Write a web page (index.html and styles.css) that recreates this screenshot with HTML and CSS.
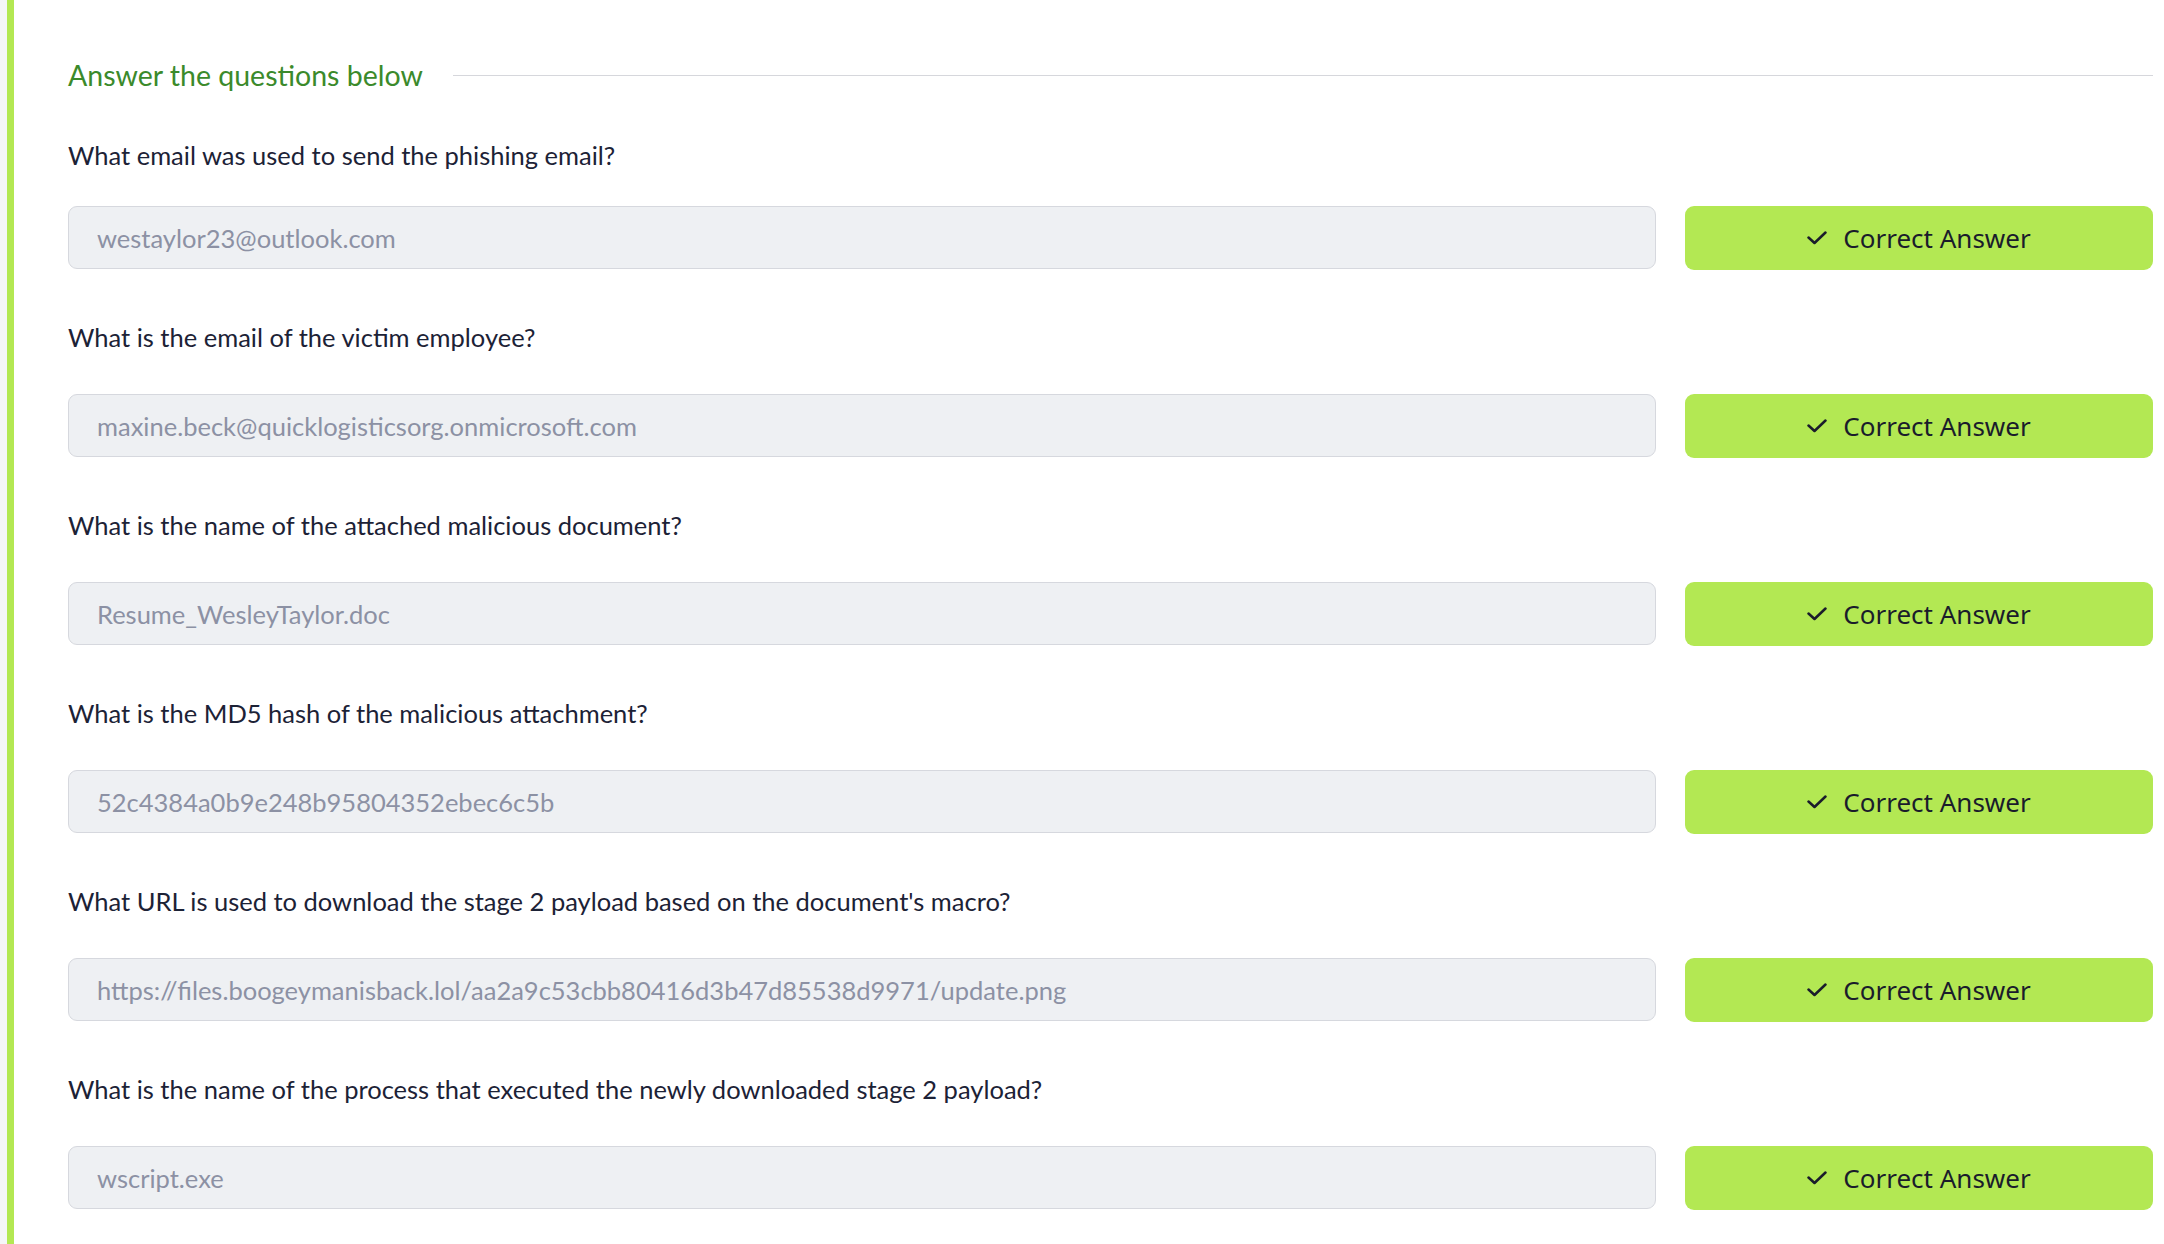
FILE: index.html
```html
<!DOCTYPE html>
<html lang="en">
<head>
  <meta charset="UTF-8" />
  <meta name="viewport" content="width=device-width, initial-scale=1.0"/>
  <title>Answer the questions below</title>
  <link rel="stylesheet" href="styles.css">
</head>
<body>
  <div class="page">
    <div class="gutter"></div>
    <div class="rail"></div>
    <div class="content">
      <div class="section-head">
        <div class="section-title">Answer the questions below</div>
        <div class="section-line"></div>
      </div>

      <div class="question first">
        <div class="q-text">What email was used to send the phishing email?</div>
        <div class="answer-row">
          <input class="answer-input" type="text" value="westaylor23@outlook.com" readonly />
          <button class="correct-btn"><svg class="check" viewBox="0 0 20 14"><path d="M1.5 6.5L7.5 12L18.5 1.5"/></svg>Correct Answer</button>
        </div>
      </div>

      <div class="question">
        <div class="q-text">What is the email of the victim employee?</div>
        <div class="answer-row">
          <input class="answer-input" type="text" value="maxine.beck@quicklogisticsorg.onmicrosoft.com" readonly />
          <button class="correct-btn"><svg class="check" viewBox="0 0 20 14"><path d="M1.5 6.5L7.5 12L18.5 1.5"/></svg>Correct Answer</button>
        </div>
      </div>

      <div class="question">
        <div class="q-text">What is the name of the attached malicious document?</div>
        <div class="answer-row">
          <input class="answer-input" type="text" value="Resume_WesleyTaylor.doc" readonly />
          <button class="correct-btn"><svg class="check" viewBox="0 0 20 14"><path d="M1.5 6.5L7.5 12L18.5 1.5"/></svg>Correct Answer</button>
        </div>
      </div>

      <div class="question">
        <div class="q-text">What is the MD5 hash of the malicious attachment?</div>
        <div class="answer-row">
          <input class="answer-input" type="text" value="52c4384a0b9e248b95804352ebec6c5b" readonly />
          <button class="correct-btn"><svg class="check" viewBox="0 0 20 14"><path d="M1.5 6.5L7.5 12L18.5 1.5"/></svg>Correct Answer</button>
        </div>
      </div>

      <div class="question">
        <div class="q-text">What URL is used to download the stage 2 payload based on the document's macro?</div>
        <div class="answer-row">
          <input class="answer-input" type="text" value="https://files.boogeymanisback.lol/aa2a9c53cbb80416d3b47d85538d9971/update.png" readonly />
          <button class="correct-btn"><svg class="check" viewBox="0 0 20 14"><path d="M1.5 6.5L7.5 12L18.5 1.5"/></svg>Correct Answer</button>
        </div>
      </div>

      <div class="question">
        <div class="q-text">What is the name of the process that executed the newly downloaded stage 2 payload?</div>
        <div class="answer-row">
          <input class="answer-input" type="text" value="wscript.exe" readonly />
          <button class="correct-btn"><svg class="check" viewBox="0 0 20 14"><path d="M1.5 6.5L7.5 12L18.5 1.5"/></svg>Correct Answer</button>
        </div>
      </div>
    </div>
  </div>
</body>
</html>
```

FILE: styles.css
```css
body {
  margin: 0;
  font-family: Lato, "Liberation Sans", sans-serif;
  background-color: #ffffff;
  color: #1c2236;
}

.page {
  display: flex;
  min-height: 1244px;
}

.gutter {
  width: 7px;
  background-color: #f5f6f8;
}

.rail {
  width: 7px;
  background-color: #b3e853;
}

.content {
  flex: 1;
  padding: 53px 11px 0 54px;
}

.section-head {
  display: flex;
  align-items: center;
  margin-bottom: 39px;
}

.section-title {
  font-size: 28.5px;
  line-height: 45px;
  color: #3b8a2b;
}

.section-line {
  flex: 1;
  height: 1.5px;
  margin-left: 30px;
  background-color: #d6d7dc;
}

.question {
  margin-bottom: 49px;
}

.q-text {
  font-size: 25.5px;
  line-height: 36px;
  margin-bottom: 39px;
}

/* первый вопрос стоит ближе к полю */
.question.first .q-text {
  margin-bottom: 33px;
}

.answer-row {
  display: flex;
  gap: 29px;
}

.answer-input {
  flex: 1;
  height: 63px;
  box-sizing: border-box;
  padding: 0 28px;
  font-family: Lato, "Liberation Sans", sans-serif;
  font-size: 25.5px;
  color: #8c91a4;
  background-color: #eef0f3;
  border: 1.5px solid #d6d8de;
  border-radius: 9px;
  outline: none;
}

.correct-btn {
  width: 468px;
  height: 64px;
  display: flex;
  align-items: center;
  justify-content: center;
  gap: 16px;
  font-family: "Noto Sans", sans-serif;
  font-size: 26px;
  color: #1a1c2b;
  background-color: #b3e853;
  border: none;
  border-radius: 9px;
  cursor: pointer;
}

.check {
  width: 20px;
  height: 14px;
  fill: none;
  stroke: #1a1c2b;
  stroke-width: 2.5;
  stroke-linecap: round;
  stroke-linejoin: round;
}
```
